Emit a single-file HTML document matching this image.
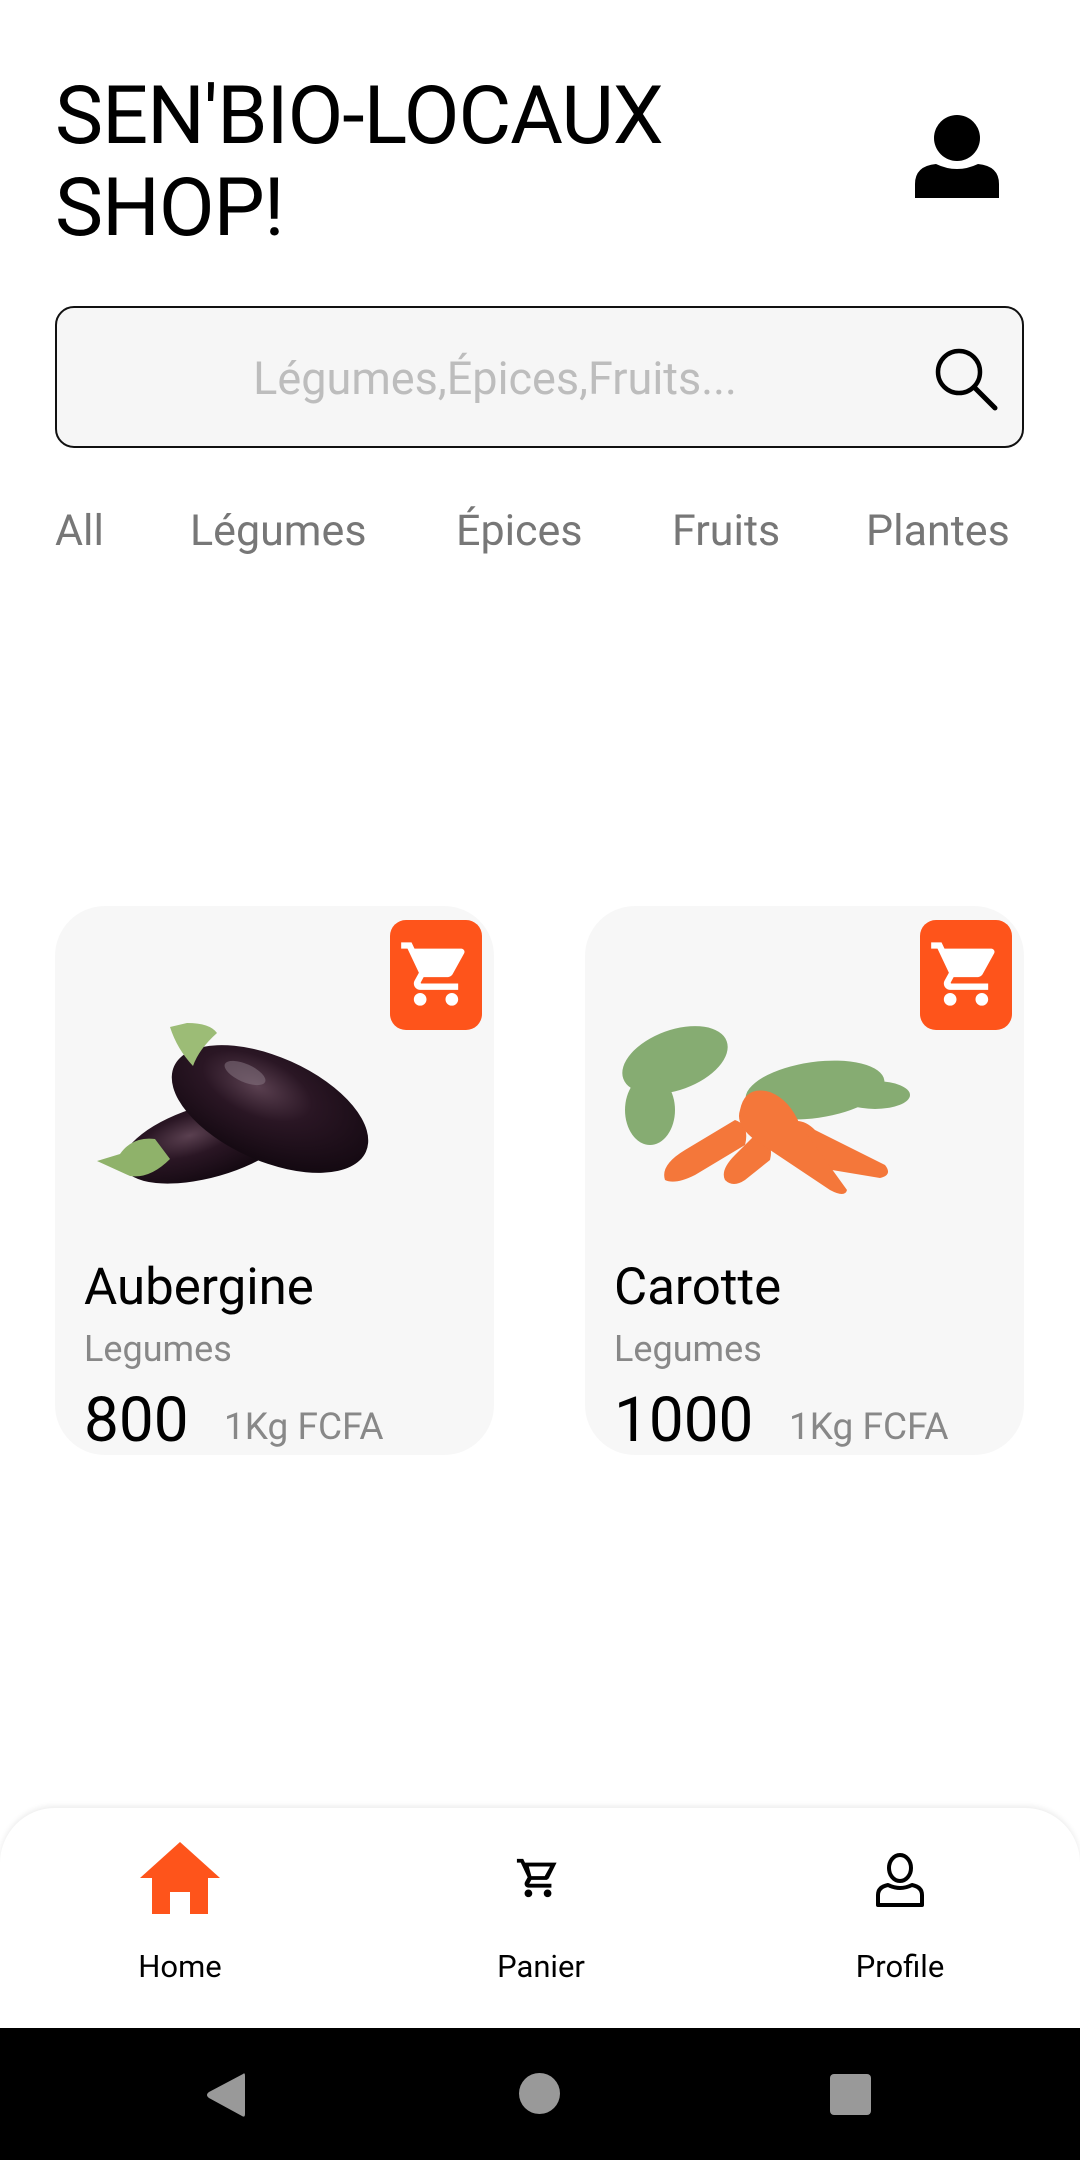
<!DOCTYPE html>
<html><head><meta charset="utf-8"><style>
*{margin:0;padding:0;box-sizing:border-box}
body{width:1080px;height:2160px;background:#fff;position:relative;overflow:hidden;font-family:"Roboto","Liberation Sans",sans-serif}
.a{position:absolute}
.title{left:55px;top:70px;font-size:81px;line-height:92px;color:#000;letter-spacing:-1px}
.search{left:55px;top:306px;width:969px;height:142px;border:2.5px solid #111;border-radius:19px;background:#f6f6f6}
.ph{left:0;width:876px;text-align:center;top:44px;font-size:45px;color:#bdbdbd}
.tab{top:506px;font-size:43px;color:#777}
.card{width:439px;height:549px;top:906px;background:#f7f7f7;border-radius:50px}
.cartbtn{width:92px;height:110px;border-radius:16px;background:#fe541b;top:14px;right:12px}
.name{left:29px;top:352px;font-size:51px;color:#000}
.cat{left:29px;top:422px;font-size:36px;color:#888}
.price{left:29px;top:478px;font-size:62px;color:#000}
.unit{top:500px;font-size:37px;color:#888}
.nav{left:0;top:1808px;width:1080px;height:240px;background:#fff;border-radius:55px 55px 0 0;box-shadow:0 -2px 6px rgba(0,0,0,.08)}
.lbl{top:1948px;font-size:31px;color:#000;width:200px;text-align:center}
.sys{left:0;top:2028px;width:1080px;height:132px;background:#000}
</style></head><body>
<div class="a title">SEN'BIO-LOCAUX<br>SHOP!</div>
<svg class="a" style="left:912px;top:114px" width="90" height="86" viewBox="0 0 90 86"><circle cx="45" cy="24" r="23" fill="#000"/><path d="M3 84 V70 Q3 52 24 50 Q45 60 66 50 Q87 52 87 70 V84 Z" fill="#000"/></svg>
<div class="a search"><div class="a ph">Légumes,Épices,Fruits...</div>
<svg class="a" style="left:876px;top:38px" width="66" height="66" viewBox="0 0 66 66"><circle cx="26" cy="26" r="21" fill="none" stroke="#000" stroke-width="4.5"/><line x1="41" y1="41" x2="62" y2="62" stroke="#000" stroke-width="5" stroke-linecap="round"/></svg></div>
<div class="a tab" style="left:55px">All</div>
<div class="a tab" style="left:190px">Légumes</div>
<div class="a tab" style="left:456px">Épices</div>
<div class="a tab" style="left:672px">Fruits</div>
<div class="a tab" style="left:866px">Plantes</div>

<div class="a card" style="left:55px">
 <div class="a cartbtn"><svg class="a" style="left:8px;top:16px" width="76" height="76" viewBox="0 0 24 24"><path fill="#fff" d="M7 18c-1.1 0-2 .9-2 2s.9 2 2 2 2-.9 2-2-.9-2-2-2zM1 2v2h2l3.6 7.59-1.35 2.45C5.09 14.32 5 14.65 5 15c0 1.1.9 2 2 2h12v-2H7.42c-.14 0-.25-.11-.25-.25l.03-.12.9-1.63h7.45c.75 0 1.41-.41 1.75-1.03l3.58-6.49A1 1 0 0 0 20 4H5.21l-.94-2H1zm16 16c-1.1 0-2 .9-2 2s.9 2 2 2 2-.9 2-2-.9-2-2-2z"/></svg></div>
 <svg class="a" style="left:40px;top:115px" width="300" height="180" viewBox="0 0 300 180">
  <defs><radialGradient id="eg" cx="0.4" cy="0.35" r="0.7"><stop offset="0" stop-color="#5a4050"/><stop offset="0.4" stop-color="#2a1624"/><stop offset="1" stop-color="#120810"/></radialGradient></defs>
  <ellipse cx="115" cy="120" rx="90" ry="36" transform="rotate(-16 115 120)" fill="url(#eg)"/>
  <path d="M2 140 L25 133 Q38 115 60 118 L75 138 Q55 158 35 155 Z" fill="#8fb26a"/>
  <ellipse cx="175" cy="88" rx="105" ry="52" transform="rotate(24 175 88)" fill="url(#eg)"/>
  <path d="M75 6 L92 2 Q115 2 122 12 Q104 28 98 45 Q82 28 75 6Z" fill="#9cbc76"/>
  <ellipse cx="150" cy="52" rx="22" ry="9" transform="rotate(24 150 52)" fill="#8a7a86" opacity=".5"/>
 </svg>
 <div class="a name">Aubergine</div>
 <div class="a cat">Legumes</div>
 <div class="a price">800</div>
 <div class="a unit" style="left:169px">1Kg FCFA</div>
</div>

<div class="a card" style="left:585px">
 <div class="a cartbtn"><svg class="a" style="left:8px;top:16px" width="76" height="76" viewBox="0 0 24 24"><path fill="#fff" d="M7 18c-1.1 0-2 .9-2 2s.9 2 2 2 2-.9 2-2-.9-2-2-2zM1 2v2h2l3.6 7.59-1.35 2.45C5.09 14.32 5 14.65 5 15c0 1.1.9 2 2 2h12v-2H7.42c-.14 0-.25-.11-.25-.25l.03-.12.9-1.63h7.45c.75 0 1.41-.41 1.75-1.03l3.58-6.49A1 1 0 0 0 20 4H5.21l-.94-2H1zm16 16c-1.1 0-2 .9-2 2s.9 2 2 2 2-.9 2-2-.9-2-2-2z"/></svg></div>
 <svg class="a" style="left:0;top:94px" width="340" height="220" viewBox="0 0 340 220">
  <g fill="#6a9a52" opacity=".8">
   <ellipse cx="90" cy="60" rx="55" ry="30" transform="rotate(-20 90 60)"/>
   <ellipse cx="65" cy="110" rx="25" ry="35"/>
   <ellipse cx="230" cy="90" rx="70" ry="28" transform="rotate(-8 230 90)"/>
   <ellipse cx="290" cy="95" rx="35" ry="14"/>
  </g>
  <g fill="#f4773a">
   <path d="M80 180 Q75 165 100 150 L150 120 Q165 125 160 145 L110 175 Q90 185 80 180Z"/>
   <path d="M140 180 Q135 170 150 155 L170 135 Q190 140 185 160 L160 180 Q148 188 140 180Z"/>
   <path d="M200 125 Q215 115 230 130 L300 165 Q308 175 295 178 L235 168 Z"/>
   <path d="M155 110 Q160 85 185 92 Q205 100 215 125 L262 190 Q260 198 245 190 L170 140 Q150 125 155 110Z"/>
  </g>
 </svg>
 <div class="a name">Carotte</div>
 <div class="a cat">Legumes</div>
 <div class="a price">1000</div>
 <div class="a unit" style="left:204px">1Kg FCFA</div>
</div>

<div class="a nav"></div>
<svg class="a" style="left:140px;top:1842px" width="80" height="72" viewBox="0 0 80 72"><path d="M40 0 L80 36 H68 V72 H50 V50 H30 V72 H12 V36 H0 Z" fill="#fe541b"/></svg>
<svg class="a" style="left:515px;top:1855px" width="46" height="46" viewBox="0 0 24 24"><path fill="#000" d="M7 18c-1.1 0-2 .9-2 2s.9 2 2 2 2-.9 2-2-.9-2-2-2zM1 2v2h2l3.6 7.59-1.35 2.45C5.09 14.32 5 14.650 5 15c0 1.1.9 2 2 2h12v-2H7.42l1.1-2h7.450c.75 0 1.41-.41 1.75-1.03L21.7 4H5.21l-.94-2H1zm6.2 4h11.1l-2.8 5H8.53zM17 18c-1.1 0-2 .9-2 2s.9 2 2 2 2-.9 2-2-.9-2-2-2z"/></svg>
<svg class="a" style="left:874px;top:1851px" width="52" height="58" viewBox="0 0 52 58"><ellipse cx="26" cy="17" rx="11" ry="13" fill="none" stroke="#000" stroke-width="4"/><path d="M4 54 V44 Q4 36 14 34 Q26 40 38 34 Q48 36 48 44 V54 Z" fill="none" stroke="#000" stroke-width="4" stroke-linejoin="round"/></svg>
<div class="a lbl" style="left:80px">Home</div>
<div class="a lbl" style="left:441px">Panier</div>
<div class="a lbl" style="left:800px">Profile</div>

<div class="a sys"></div>
<svg class="a" style="left:205px;top:2072px" width="42" height="46" viewBox="0 0 42 46"><path d="M38 2 Q40 0 40 4 V42 Q40 46 37 44 L4 26 Q0 23 4 20 Z" fill="#999"/></svg>
<div class="a" style="left:519px;top:2073px;width:41px;height:41px;border-radius:50%;background:#999"></div>
<div class="a" style="left:830px;top:2074px;width:41px;height:41px;border-radius:4px;background:#999"></div>
</body></html>
